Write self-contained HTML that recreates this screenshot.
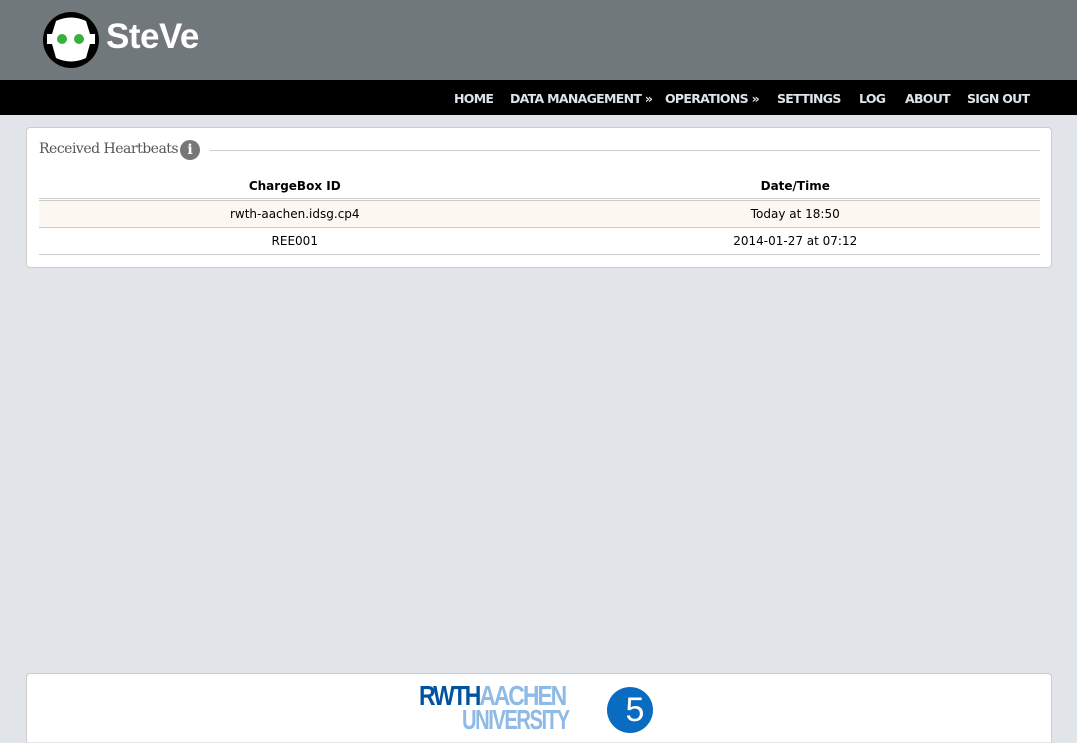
<!DOCTYPE html>
<html style="overflow:hidden;height:743px"><head><meta charset="utf-8"><style>
body{margin:0;width:1077px;height:743px;overflow:hidden;background:#e1e5e9;font-family:"DejaVu Sans","Liberation Sans",sans-serif;position:relative}
.hdr{height:80px;background:#71787b;position:relative}
.nav{height:35px;background:#000;position:relative}
.nav span{position:absolute;top:11px;font-size:12.5px;font-weight:bold;color:#dde3ea;white-space:nowrap;letter-spacing:-0.7px}
.card{position:absolute;left:26px;top:127px;width:1024px;height:139px;background:#fff;border:1px solid #ccc;border-radius:4px}
.title{position:absolute;left:12px;top:13px;font-family:"DejaVu Serif","Liberation Serif",serif;font-size:14px;color:#555;letter-spacing:-0.5px}
.info{position:absolute;left:153px;top:12px;width:20px;height:20px;border-radius:50%;background:#777;color:#fff;font:bold 14px "DejaVu Serif",serif;text-align:center;line-height:20px}
.line{position:absolute;left:183px;top:22px;width:830px;border-top:1px solid #ccc}
table{position:absolute;left:12px;top:45px;width:1001px;border-collapse:collapse;font-size:12px;color:#000}
th{height:25px;font-weight:bold;border-bottom:3px double #ccc;text-align:center;padding:0}
td{height:26px;text-align:center;border-bottom:1px solid #ccc;padding:0}
.foot{position:absolute;left:26px;top:673px;width:1024px;height:68px;background:#fff;border:1px solid #ccc;border-bottom:none;border-radius:4px 4px 0 0}
</style></head><body>
<div class="hdr">
<svg style="position:absolute;left:42px;top:11px" width="60" height="58" viewBox="0 0 60 58">
<circle cx="29" cy="29" r="28" fill="#000"/>
<path d="M14 10 Q29 3 44 10 L48 23 L53 23 L53 33 L48 33 L44 47 Q29 54 14 47 L10 33 L5 33 L5 23 L10 23 Z" fill="#fff"/>
<circle cx="20" cy="28" r="5" fill="#3cae3c"/><circle cx="37" cy="28" r="5" fill="#3cae3c"/>
</svg>
<div style="position:absolute;left:106px;top:17px;font:bold 35px 'Liberation Sans',sans-serif;color:#fff;letter-spacing:-0.5px">SteVe</div>
</div>
<div class="nav">
<span style="left:454px">HOME</span>
<span style="left:510px">DATA MANAGEMENT »</span>
<span style="left:665px">OPERATIONS »</span>
<span style="left:777px">SETTINGS</span>
<span style="left:859px">LOG</span>
<span style="left:905px">ABOUT</span>
<span style="left:967px">SIGN OUT</span>
</div>
<div class="card">
<div class="title">Received Heartbeats</div>
<div class="info">i</div>
<div class="line"></div>
<table>
<tr><th>ChargeBox ID</th><th>Date/Time</th></tr>
<tr style="background:#fcf8f1"><td>rwth-aachen.idsg.cp4</td><td>Today at 18:50</td></tr>
<tr><td>REE001</td><td>2014-01-27 at 07:12</td></tr>
</table>
</div>
<div class="foot">
<div style="position:absolute;left:392px;top:10px;font:bold 28px/24px 'Liberation Sans',sans-serif;letter-spacing:-2.5px;transform:scaleX(0.82);transform-origin:left;white-space:nowrap"><span style="color:#00549f">RWTH</span><span style="color:#8ebae5">AACHEN</span></div>
<div style="position:absolute;left:435px;top:34px;font:bold 28px/24px 'Liberation Sans',sans-serif;letter-spacing:-2px;color:#8ebae5;transform:scaleX(0.72);transform-origin:left">UNIVERSITY</div>
<div style="position:absolute;left:580px;top:13px;width:46px;height:46px;border-radius:50%;background:#0a6cc0;color:#fff;font:34px/46px 'Liberation Sans',sans-serif;text-align:center;text-indent:10px">5</div>
</div>
</body></html>
